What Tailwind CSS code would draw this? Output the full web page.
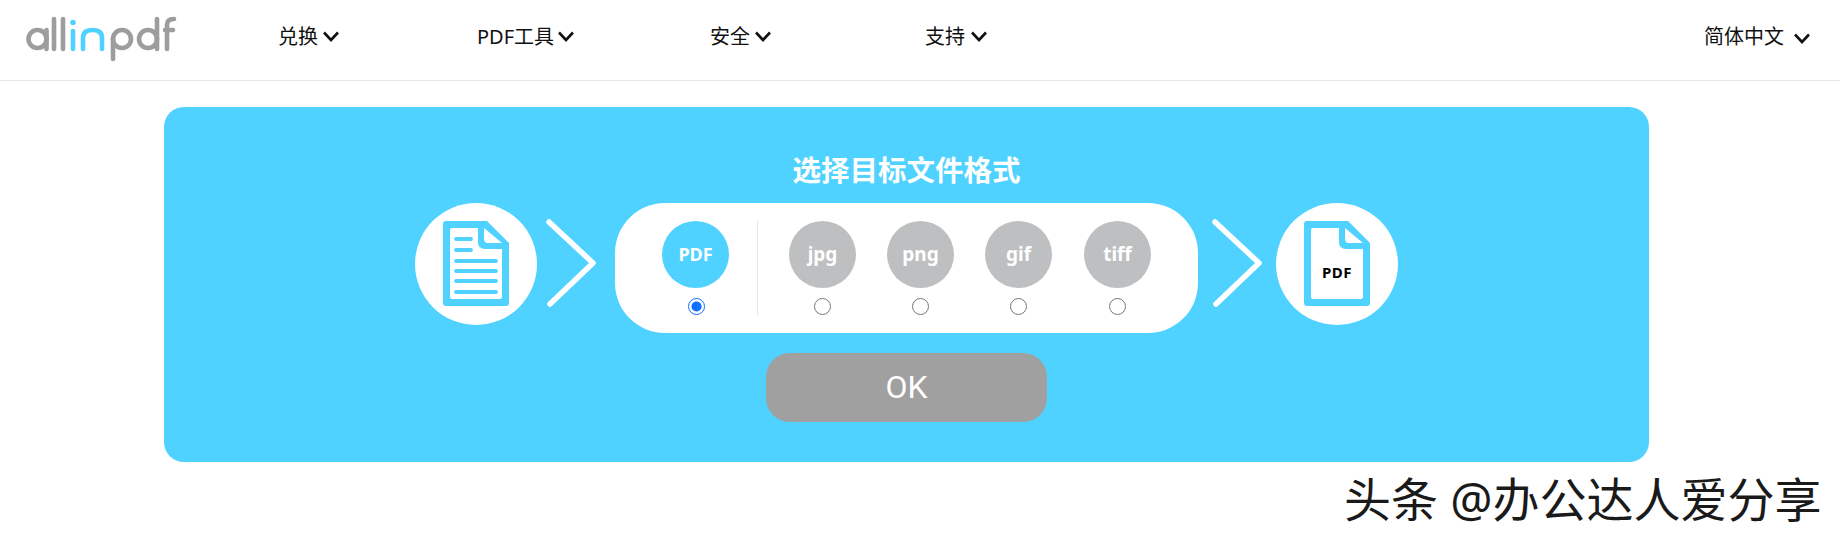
<!DOCTYPE html>
<html lang="zh-CN">
<head>
<meta charset="utf-8">
<title>allinpdf</title>
<script src="https://cdn.jsdelivr.net/npm/@tailwindcss/browser@4"></script>
</head>
<body class="relative w-[1840px] h-[540px] overflow-hidden bg-white font-['Noto_Sans','Noto_Sans_CJK_SC',sans-serif]">
<header class="h-[81px] border-b border-[#e6e6e6] flex items-center relative">
  <svg class="absolute left-[20px] top-[10px]" width="165" height="55" viewBox="20 10 165 55" fill="none" stroke-width="4.6" stroke-linecap="round" role="img" aria-label="allinpdf">
    <g stroke="#9d9d9d">
      <circle cx="37.5" cy="39" r="9"/><path d="M46.5 30v19M54 19v30M63 19v30"/>
      <circle cx="122" cy="39" r="9"/><path d="M113 39v20"/>
      <circle cx="148" cy="39" r="9"/><path d="M157 19v30"/>
      <path d="M167 49V25q0-6 7-6M165 30h8"/>
    </g>
    <g stroke="#4fd2ff">
      <path d="M73 31v18M83 49V38q0-8 9.500-8t9.500 8v11"/>
    </g>
    <circle cx="73" cy="22.500" r="2.800" fill="#4fd2ff"/>
  </svg>
  <nav class="flex items-center ml-[278px] text-[20px] leading-[28px] text-[#111] -mt-[7px]">
    <a class="w-[199px] flex items-center gap-[5px]">兑换<svg width="16" height="11" viewBox="0 0 16 11" fill="none" stroke="#111" stroke-width="2.600"><path d="M1 1.500l7 7.500 7-7.500"/></svg></a>
    <a class="w-[233px] flex items-center gap-[4px]">PDF工具<svg width="16" height="11" viewBox="0 0 16 11" fill="none" stroke="#111" stroke-width="2.600"><path d="M1 1.500l7 7.500 7-7.500"/></svg></a>
    <a class="w-[215px] flex items-center gap-[5px]">安全<svg width="16" height="11" viewBox="0 0 16 11" fill="none" stroke="#111" stroke-width="2.600"><path d="M1 1.500l7 7.500 7-7.500"/></svg></a>
    <a class="flex items-center gap-[6px]">支持<svg width="16" height="11" viewBox="0 0 16 11" fill="none" stroke="#111" stroke-width="2.600"><path d="M1 1.500l7 7.500 7-7.500"/></svg></a>
  </nav>
  <a class="ml-auto mr-[30px] flex items-center gap-[10px] text-[20px] leading-[28px] text-[#111] -mt-[6px]">简体中文<svg class="mt-[3px]" width="16" height="11" viewBox="0 0 16 11" fill="none" stroke="#111" stroke-width="2.600"><path d="M1 1.500l7 7.500 7-7.500"/></svg></a>
</header>

<main class="ml-[164px] mt-[26px] w-[1485px] h-[355px] rounded-[20px] bg-[#4fd2ff] flex flex-col items-center pt-[43px]">
  <h1 class="h-[40px] leading-[40px] text-[28.5px] font-bold text-white">选择目标文件格式</h1>
  <div class="mt-[13px] flex items-start">
    <div class="w-[122px] h-[122px] rounded-full bg-white flex items-center justify-center">
      <svg class="-mt-px" width="66" height="85" viewBox="0 0 66 85">
        <path fill="#4fd2ff" d="M3 0H44L66 22V82a3 3 0 0 1-3 3H3a3 3 0 0 1-3-3V3a3 3 0 0 1 3-3Z"/>
        <path fill="#fff" d="M9 7H35V21q0 7 7 7H59V76a2 2 0 0 1-2 2H9a2 2 0 0 1-2-2V9a2 2 0 0 1 2-2Z"/>
        <path fill="#fff" d="M41 7L59 22H45q-4 0-4-4Z"/>
        <path stroke="#4fd2ff" stroke-width="3.800" stroke-linecap="round" d="M13 18H28M13 29H28M13 40H53M13 50H53M13 60H53M13 71H53"/>
      </svg>
    </div>
    <svg class="ml-[9px] mr-[19px] mt-[15px]" width="50" height="90" viewBox="0 0 50 90" fill="none" stroke="#fff" stroke-width="5.500" stroke-linecap="round" stroke-linejoin="round"><path d="M3 4L47 45L4 86"/></svg>
    <div class="w-[583px] h-[130px] rounded-[50px] bg-white flex items-start pl-[47px] pt-[18px]">
      <label class="w-[67px] flex flex-col items-center">
        <span class="w-[67px] h-[67px] rounded-full bg-[#4fd2ff] flex items-center justify-center text-white font-bold text-[18px]">PDF</span>
        <input type="radio" name="fmt" checked class="w-[17px] h-[17px] m-0 mt-[10px] ml-[2px] accent-[#0f6fff]">
      </label>
      <div class="w-px h-[94px] bg-[#e6e6e6] ml-[28px] mr-[31px]"></div>
      <div class="flex gap-[31px]">
        <label class="w-[67px] flex flex-col items-center">
          <span class="w-[67px] h-[67px] rounded-full bg-[#bdbfc1] flex items-center justify-center text-white font-bold text-[19px]">jpg</span>
          <input type="radio" name="fmt" class="w-[17px] h-[17px] m-0 mt-[10px]">
        </label>
        <label class="w-[67px] flex flex-col items-center">
          <span class="w-[67px] h-[67px] rounded-full bg-[#bdbfc1] flex items-center justify-center text-white font-bold text-[19px]">png</span>
          <input type="radio" name="fmt" class="w-[17px] h-[17px] m-0 mt-[10px]">
        </label>
        <label class="w-[67px] flex flex-col items-center">
          <span class="w-[67px] h-[67px] rounded-full bg-[#bdbfc1] flex items-center justify-center text-white font-bold text-[19px]">gif</span>
          <input type="radio" name="fmt" class="w-[17px] h-[17px] m-0 mt-[10px]">
        </label>
        <label class="w-[67px] ml-px flex flex-col items-center">
          <span class="w-[67px] h-[67px] rounded-full bg-[#bdbfc1] flex items-center justify-center text-white font-bold text-[19px]">tiff</span>
          <input type="radio" name="fmt" class="w-[17px] h-[17px] m-0 mt-[10px]">
        </label>
      </div>
    </div>
    <svg class="ml-[14px] mr-[14px] mt-[15px]" width="50" height="90" viewBox="0 0 50 90" fill="none" stroke="#fff" stroke-width="5.500" stroke-linecap="round" stroke-linejoin="round"><path d="M3 4L47 45L4 86"/></svg>
    <div class="w-[122px] h-[122px] rounded-full bg-white flex items-center justify-center">
      <svg class="-mt-px" width="66" height="85" viewBox="0 0 66 85">
        <path fill="#4fd2ff" d="M3 0H44L66 22V82a3 3 0 0 1-3 3H3a3 3 0 0 1-3-3V3a3 3 0 0 1 3-3Z"/>
        <path fill="#fff" d="M9 7H35V21q0 7 7 7H59V76a2 2 0 0 1-2 2H9a2 2 0 0 1-2-2V9a2 2 0 0 1 2-2Z"/>
        <path fill="#fff" d="M41 7L59 22H45q-4 0-4-4Z"/>
        <text x="33" y="57" text-anchor="middle" font-family="Noto Sans" font-weight="700" font-size="15" letter-spacing="0.500" fill="#000">PDF</text>
      </svg>
    </div>
  </div>
  <button class="mt-[20px] w-[281px] h-[69px] rounded-[24px] bg-[#a0a0a0] text-white font-['Roboto',sans-serif] text-[32px] leading-[69px]">OK</button>
</main>

<div class="absolute left-[1344px] top-[469px] text-[47px] leading-[60px] whitespace-nowrap text-[#1a1a1a]">头条 @办公达人爱分享</div>
</body>
</html>
